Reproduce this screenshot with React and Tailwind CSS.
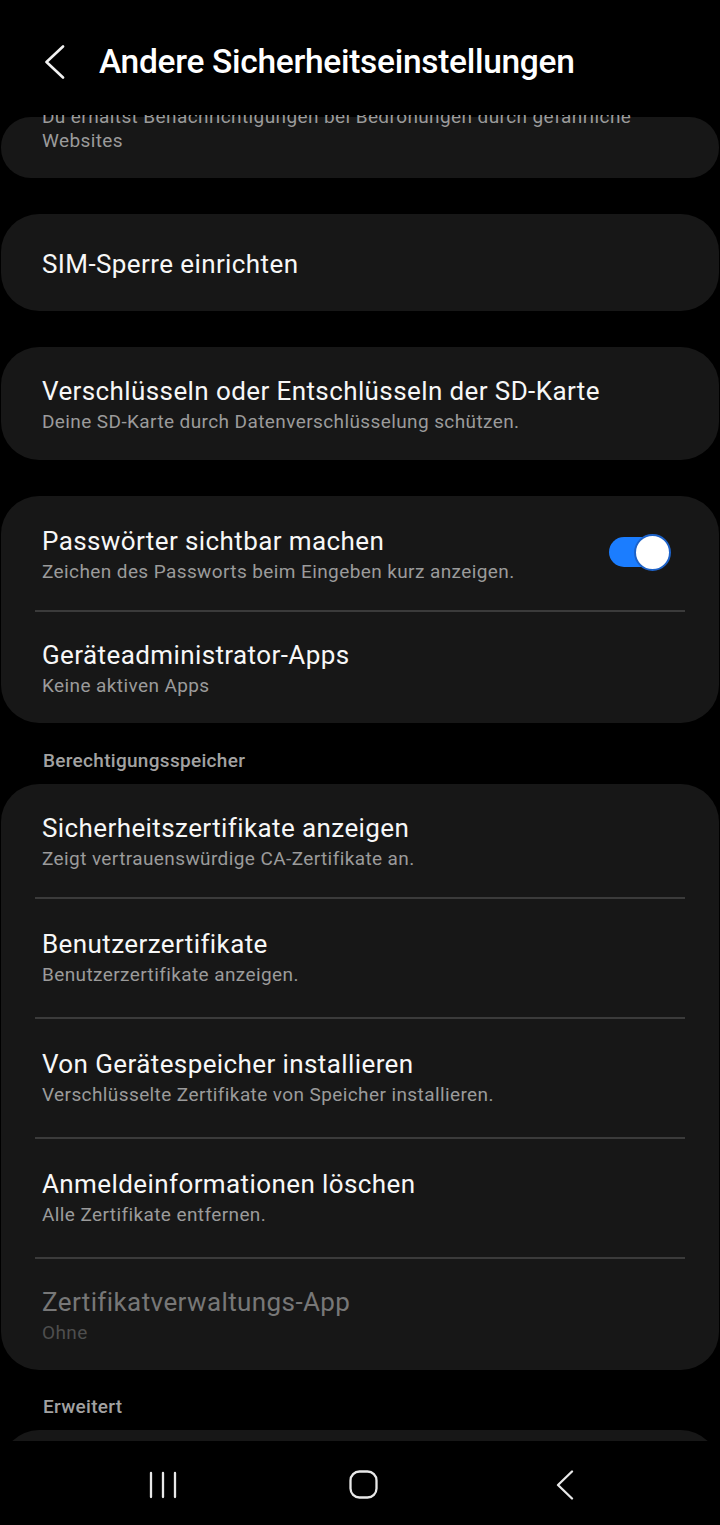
import React from "react";

const FONT = { fontFamily: "Roboto, 'Noto Sans', sans-serif" };

function Row({ title, sub, pad, dim, right }) {
  return (
    <div className={`flex items-center pl-[41px] pr-[48px] ${pad}`}>
      <div className="flex-1 flex flex-col">
        <div
          className={`text-[26px] leading-[34px] tracking-[0.4px] ${
            dim ? "text-[#777777]" : "text-[#f7f7f7]"
          }`}
        >
          {title}
        </div>
        {sub && (
          <div
            className={`text-[19px] leading-[28px] tracking-[0.4px] ${
              dim ? "text-[#4e4e4e]" : "text-[#9b9b9b]"
            }`}
          >
            {sub}
          </div>
        )}
      </div>
      {right}
    </div>
  );
}

function Divider() {
  return <div className="h-[2px] mx-[34px] bg-[#3b3b3b]" />;
}

function Toggle() {
  return (
    <div className="relative w-[62px] h-[37px] -mt-[6px] flex items-center">
      <div className="w-[58px] h-[30px] rounded-full bg-[#1b7dff]" />
      <div className="absolute right-0 top-0 w-[37px] h-[37px] rounded-full bg-white border-[2px] border-[#1d62c8]" />
    </div>
  );
}

function Section({ children, pad }) {
  return (
    <div
      className={`pl-[42px] text-[19px] leading-[24px] font-medium text-[#a2a2a2] tracking-[0.3px] ${pad}`}
    >
      {children}
    </div>
  );
}

export default function App() {
  return (
    <div
      className="w-[720px] h-[1525px] bg-black flex flex-col overflow-hidden"
      style={FONT}
    >
      {/* Header */}
      <div className="h-[115px] shrink-0 pt-[40px]">
        <div className="h-[44px] flex items-center">
          <svg
            className="ml-[44px]"
            width="21"
            height="34"
            viewBox="0 0 21 34"
          >
            <polyline
              points="19,1.5 2.5,17 19,32.5"
              fill="none"
              stroke="#f2f2f2"
              strokeWidth="2.6"
              strokeLinecap="round"
              strokeLinejoin="round"
            />
          </svg>
          <div className="ml-[34px] text-[33.5px] leading-[44px] font-medium text-white tracking-[-0.3px]">
            Andere Sicherheitseinstellungen
          </div>
        </div>
      </div>

      {/* List */}
      <div className="flex-1 overflow-hidden flex flex-col px-[1px]">
        <div className="mt-[2px] h-[61px] shrink-0 rounded-[30px] bg-[#171717]">
          <div className="-mt-[12px] pl-[41px] pr-[60px] text-[19px] leading-[24px] tracking-[0.4px] text-[#9b9b9b]">
            Du erhältst Benachrichtigungen bei Bedrohungen durch gefährliche
            Websites
          </div>
        </div>

        <div className="mt-[36px] shrink-0 rounded-[38px] bg-[#171717]">
          <Row title="SIM-Sperre einrichten" pad="pt-[33px] pb-[30px]" />
        </div>

        <div className="mt-[36px] shrink-0 rounded-[38px] bg-[#171717]">
          <Row
            title="Verschlüsseln oder Entschlüsseln der SD-Karte"
            sub="Deine SD-Karte durch Datenverschlüsselung schützen."
            pad="pt-[27px] pb-[24px]"
          />
        </div>

        <div className="mt-[36px] shrink-0 rounded-[38px] bg-[#171717]">
          <Row
            title="Passwörter sichtbar machen"
            sub="Zeichen des Passworts beim Eingeben kurz anzeigen."
            pad="pt-[28px] pb-[24px]"
            right={<Toggle />}
          />
          <Divider />
          <Row
            title="Geräteadministrator-Apps"
            sub="Keine aktiven Apps"
            pad="pt-[26px] pb-[23px]"
          />
        </div>

        <Section pad="pt-[26px] pb-[11px]">Berechtigungsspeicher</Section>

        <div className="shrink-0 rounded-[38px] bg-[#171717]">
          <Row
            title="Sicherheitszertifikate anzeigen"
            sub="Zeigt vertrauenswürdige CA-Zertifikate an."
            pad="pt-[27px] pb-[24px]"
          />
          <Divider />
          <Row
            title="Benutzerzertifikate"
            sub="Benutzerzertifikate anzeigen."
            pad="pt-[28px] pb-[28px]"
          />
          <Divider />
          <Row
            title="Von Gerätespeicher installieren"
            sub="Verschlüsselte Zertifikate von Speicher installieren."
            pad="pt-[28px] pb-[28px]"
          />
          <Divider />
          <Row
            title="Anmeldeinformationen löschen"
            sub="Alle Zertifikate entfernen."
            pad="pt-[28px] pb-[28px]"
          />
          <Divider />
          <Row
            title="Zertifikatverwaltungs-App"
            sub="Ohne"
            pad="pt-[26px] pb-[23px]"
            dim
          />
        </div>

        <Section pad="pt-[25px] pb-[11px]">Erweitert</Section>

        <div className="h-[100px] shrink-0 rounded-[38px] bg-[#171717]" />
      </div>

      {/* Nav bar */}
      <div className="h-[84px] shrink-0 bg-black flex items-center pl-[63px] pt-[3px]">
        <div className="w-[200px] flex justify-center">
          <svg width="28" height="28" viewBox="0 0 28 28">
            <g stroke="#e8e8e8" strokeWidth="2.3" strokeLinecap="round">
              <line x1="2" y1="2" x2="2" y2="26" />
              <line x1="14" y1="2" x2="14" y2="26" />
              <line x1="26" y1="2" x2="26" y2="26" />
            </g>
          </svg>
        </div>
        <div className="w-[200px] flex justify-center">
          <svg width="29" height="29" viewBox="0 0 29 29">
            <rect
              x="1.5"
              y="1.5"
              width="26"
              height="26"
              rx="9"
              fill="none"
              stroke="#e8e8e8"
              strokeWidth="2.3"
            />
          </svg>
        </div>
        <div className="w-[200px] flex justify-center pl-[4px]">
          <svg width="18" height="30" viewBox="0 0 18 30">
            <polyline
              points="16,1.5 2,15 16,28.5"
              fill="none"
              stroke="#e8e8e8"
              strokeWidth="2.3"
              strokeLinecap="round"
              strokeLinejoin="round"
            />
          </svg>
        </div>
      </div>
    </div>
  );
}
